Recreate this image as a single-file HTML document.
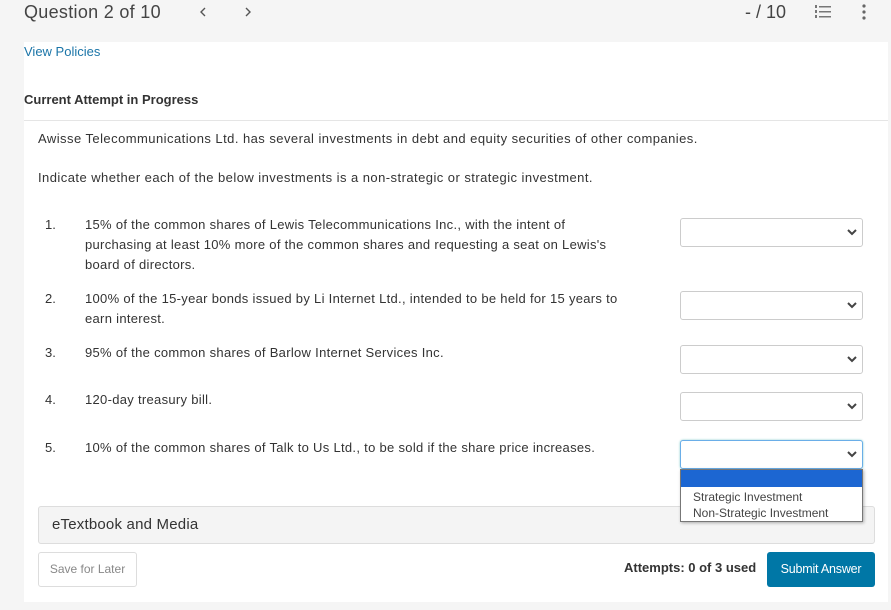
<!DOCTYPE html>
<html><head><style>
*{margin:0;padding:0;box-sizing:border-box}
body{width:891px;height:610px;background:#f5f5f5;font-family:"Liberation Sans",sans-serif;position:relative;overflow:hidden;color:#333}
.a{position:absolute}
.panel{left:24px;top:42px;width:864px;height:560px;background:#fff}
.sel{position:absolute;left:680px;width:183px;height:29px;border:1px solid #ccc;border-radius:3px;background:#fff}
.sel svg{position:absolute;right:5px;top:10px}
.num{position:absolute;left:45px;font-size:13px;color:#333}
.txt{position:absolute;left:85px;font-size:13px;line-height:20px;color:#333;width:600px;letter-spacing:0.3px}
.p{font-size:13px;letter-spacing:0.45px}
</style></head><body>
<div class="a" style="left:24px;top:2px;font-size:18px;color:#444;letter-spacing:0.3px">Question 2 of 10</div>
<svg class="a" style="left:199px;top:7px" width="8" height="10"><path d="M6 1L2 5L6 9" stroke="#555" stroke-width="1.4" fill="none"/></svg>
<svg class="a" style="left:244px;top:7px" width="8" height="10"><path d="M2 1L6 5L2 9" stroke="#555" stroke-width="1.4" fill="none"/></svg>
<div class="a" style="left:745px;top:2px;font-size:18px;color:#444">- / 10</div>
<svg class="a" style="left:814px;top:5px" width="18" height="14"><g fill="#777"><rect x="5" y="1" width="12" height="1.5"/><rect x="5" y="6" width="12" height="1.5"/><rect x="5" y="11" width="12" height="1.5"/><rect x="1" y="0" width="2" height="3"/><rect x="1" y="5" width="2" height="3"/><rect x="1" y="10" width="2" height="3"/></g></svg>
<svg class="a" style="left:862px;top:4px" width="4" height="16"><g fill="#666"><circle cx="2" cy="2" r="1.6"/><circle cx="2" cy="8" r="1.6"/><circle cx="2" cy="14" r="1.6"/></g></svg>
<div class="a panel"></div>
<div class="a" style="left:24px;top:44px;font-size:13px;color:#1b75a8">View Policies</div>
<div class="a" style="left:24px;top:92px;font-size:13px;font-weight:bold;color:#333">Current Attempt in Progress</div>
<div class="a" style="left:24px;top:120px;width:864px;height:1px;background:#e5e5e5"></div>
<div class="a p" style="left:38px;top:131px">Awisse Telecommunications Ltd. has several investments in debt and equity securities of other companies.</div>
<div class="a p" style="left:38px;top:170px">Indicate whether each of the below investments is a non-strategic or strategic investment.</div>
<div class="num" style="top:217px">1.</div>
<div class="txt" style="top:215px">15% of the common shares of Lewis Telecommunications Inc., with the intent of<br>purchasing at least 10% more of the common shares and requesting a seat on Lewis's<br>board of directors.</div>
<div class="num" style="top:291px">2.</div>
<div class="txt" style="top:289px">100% of the 15-year bonds issued by Li Internet Ltd., intended to be held for 15 years to<br>earn interest.</div>
<div class="num" style="top:345px">3.</div>
<div class="txt" style="top:343px">95% of the common shares of Barlow Internet Services Inc.</div>
<div class="num" style="top:392px">4.</div>
<div class="txt" style="top:390px">120-day treasury bill.</div>
<div class="num" style="top:440px">5.</div>
<div class="txt" style="top:438px">10% of the common shares of Talk to Us Ltd., to be sold if the share price increases.</div>
<div class="sel" style="top:218px"><svg width="10" height="7"><path d="M1 1L5 5L9 1" stroke="#444" stroke-width="2" fill="none"/></svg></div>
<div class="sel" style="top:291px"><svg width="10" height="7"><path d="M1 1L5 5L9 1" stroke="#444" stroke-width="2" fill="none"/></svg></div>
<div class="sel" style="top:345px"><svg width="10" height="7"><path d="M1 1L5 5L9 1" stroke="#444" stroke-width="2" fill="none"/></svg></div>
<div class="sel" style="top:392px"><svg width="10" height="7"><path d="M1 1L5 5L9 1" stroke="#444" stroke-width="2" fill="none"/></svg></div>
<div class="a" style="left:38px;top:506px;width:837px;height:38px;background:#f4f4f4;border:1px solid #ddd;border-radius:3px"></div>
<div class="a" style="left:52px;top:516px;font-size:15px;color:#333;letter-spacing:0.2px">eTextbook and Media</div>
<div class="sel" style="top:440px;border-color:#6aaee8;box-shadow:0 0 2px #8cc"><svg width="10" height="7"><path d="M1 1L5 5L9 1" stroke="#444" stroke-width="2" fill="none"/></svg></div>
<div class="a" style="left:680px;top:469px;width:183px;height:53px;background:#fff;border:1px solid #777;box-shadow:1px 1px 3px rgba(0,0,0,.3)">
<div style="height:17px;background:#1c66d2"></div>
<div style="font-size:12px;color:#444;padding-left:12px;line-height:16px;margin-top:2px">Strategic Investment<br>Non-Strategic Investment</div></div>
<div class="a" style="left:38px;top:552px;width:99px;height:35px;border:1px solid #ddd;border-radius:3px;font-size:12px;color:#888;text-align:center;line-height:33px">Save for Later</div>
<div class="a" style="left:624px;top:560px;font-size:13px;font-weight:bold;color:#333">Attempts: 0 of 3 used</div>
<div class="a" style="left:767px;top:552px;width:108px;height:35px;background:#0077a6;border-radius:3px;color:#fff;font-size:12.5px;text-align:center;line-height:35px;letter-spacing:-0.2px">Submit Answer</div>
</body></html>
